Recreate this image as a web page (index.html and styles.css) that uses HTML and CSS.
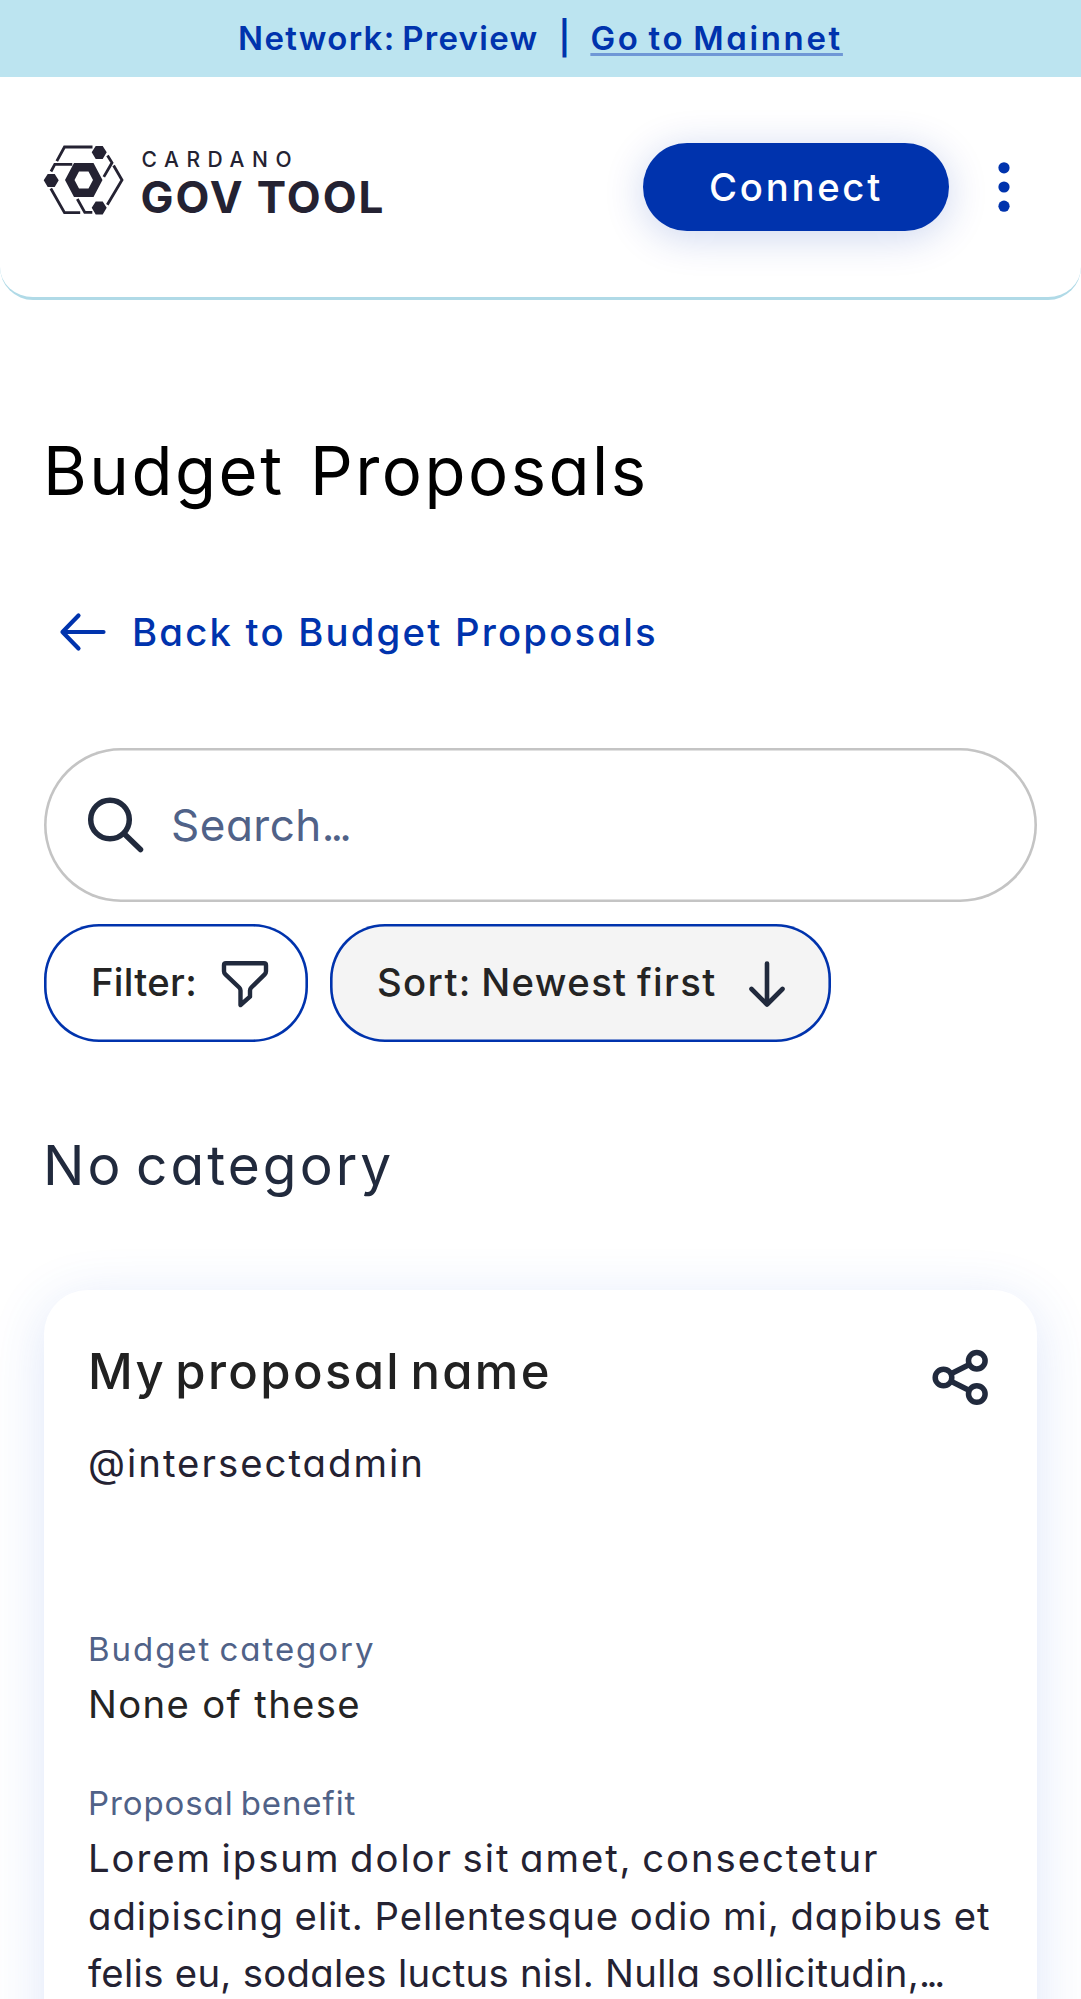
FILE: index.html
```html
<!DOCTYPE html>
<html lang="en">
<head>
<meta charset="utf-8">
<title>Budget Proposals</title>
<link rel="stylesheet" href="styles.css">
</head>
<body>
<div class="banner">
  <span class="network">Network: Preview</span>
  <span class="divider">|</span>
  <a class="mainnet">Go to Mainnet</a>
</div>
<header class="header">
  <svg class="logo" width="340" height="70" viewBox="0 0 340 70">
    <g fill="none" stroke="#242232" stroke-width="2.8">
      <path d="M12.8 16.2 20.5 2h28M7 26.500l3.800-7.200h17.500M6.800 43.500 20.500 67.600h15.700M63.500 10.500l4.500 7.200-8.200 14.200M69.600 20.500 78 35 63.300 59.800M33.300 54l7.500 13.400h7.500"/>
    </g>
    <g fill="#242232">
      <path d="M51.700 1h7l4 6.300-4 6.700h-7l-4-6.700zM3.700 29h7l4 6.300-4 6.700h-7l-4-6.700zM51.700 56.500h7l4 6.300-4 6.700h-7l-4-6.700z"/>
      <path fill-rule="evenodd" d="M30 18h19.500L58.500 35 49.500 52H30L21 35zM35 26.500 30.500 35l4.500 8.500h9.500L49 35l-4.500-8.500z"/>
    </g>
    <text class="logo-small" x="97.500" y="22" textLength="150">CARDANO</text>
    <text class="logo-big" x="96.500" y="68.300" textLength="243">GOV TOOL</text>
  </svg>
  <div class="actions">
    <button class="connect">Connect</button>
    <svg class="menu" width="12" height="50" viewBox="0 0 12 50" fill="#0033ad"><circle cx="6" cy="5.800" r="5.600"/><circle cx="6" cy="25" r="5.600"/><circle cx="6" cy="44.200" r="5.600"/></svg>
  </div>
</header>
<main class="main">
  <h1 class="title">Budget Proposals</h1>
  <a class="back">
    <svg width="48" height="40" viewBox="0 0 48 40" fill="none" stroke="#0033ad" stroke-width="4.200" stroke-linecap="round" stroke-linejoin="round"><path d="M44.500 20H3.500M19.500 3.500 3.500 20l16 16.500"/></svg>
    <span>Back to Budget Proposals</span>
  </a>
  <div class="search">
    <svg width="58" height="58" viewBox="0 0 58 58" fill="none" stroke="#212a3d" stroke-width="5.500" stroke-linecap="round"><circle cx="23" cy="23.500" r="19.300"/><path d="M38 38.500 53.500 53.500"/></svg>
    <p>Search<span class="dots">...</span></p>
  </div>
  <div class="chips">
    <button class="chip"><span>Filter:</span>
      <svg width="48" height="48" viewBox="0 0 48 48" fill="none" stroke="#212a3d" stroke-width="4.400" stroke-linejoin="round"><path d="M5 3.300h38q2 0 2 2v6q0 1.800-1.300 3.100L30.300 27.500q-1.300 1.300-1.300 3v6.200L19.500 45V30.500q0-1.700-1.300-3L4.400 14.400Q3 13.100 3 11.300v-6q0-2 2-2z"/></svg>
    </button>
    <button class="chip chip-active"><span>Sort: Newest first</span>
      <svg width="38" height="48" viewBox="0 0 38 48" fill="none" stroke="#212a3d" stroke-width="4.600" stroke-linecap="round" stroke-linejoin="round"><path d="M19 3.500v41M3.500 29 19 44.500 34.500 29"/></svg>
    </button>
  </div>
  <h2 class="category">No category</h2>
  <article class="card">
    <div class="card-head">
      <h3 class="card-title">My proposal name</h3>
      <svg class="share" width="57" height="57" viewBox="0 0 57 57" fill="none" stroke="#212a3d" stroke-width="5.500"><circle cx="11.500" cy="28.500" r="8.300"/><circle cx="44.800" cy="11.700" r="8.300"/><circle cx="44.800" cy="45" r="8.300"/><path d="m19 24.700 18.400-9.200M19 32.300l18.400 9.200"/></svg>
    </div>
    <p class="author">@intersectadmin</p>
    <p class="label label-category">Budget category</p>
    <p class="value value-category">None of these</p>
    <p class="label label-benefit">Proposal benefit</p>
    <p class="value"><span class="line-1">Lorem ipsum dolor sit amet, consectetur</span><br><span class="line-2">adipiscing elit. Pellentesque odio mi, dapibus et</span><br><span class="line-3">felis eu, sodales luctus nisl. Nulla sollicitudin,</span><span class="dots">...</span></p>
  </article>
</main>
</body>
</html>
```
FILE: styles.css
```css
* { box-sizing: border-box; margin: 0; padding: 0; }
body { width: 1081px; height: 1999px; overflow: hidden; background: #fff; color: #242232; font-family: Inter, sans-serif; font-size: 38.3px; font-feature-settings: "cv11", "calt" 0; white-space: nowrap; }
button { font: inherit; font-feature-settings: inherit; border: 0; background: none; }

.banner { display: flex; justify-content: center; align-items: center; height: 77px; padding-bottom: 2px; background: #bce4f0; color: #0033ad; font-size: 33px; font-weight: 600; line-height: 50px; }
.network { letter-spacing: 1.3px; word-spacing: -3px; }
.divider { margin: 0 20px; }
.mainnet { letter-spacing: 2.65px; word-spacing: -3px; text-decoration: underline; text-decoration-color: #6f97d6; text-decoration-thickness: 3px; text-underline-offset: 3px; }

.header { display: flex; justify-content: space-between; align-items: center; height: 223px; padding: 0 71px 0 44px; border-bottom: 3px solid #b0dae7; border-radius: 0 0 33px 33px; }
.logo { margin-bottom: 14px; overflow: visible; fill: #242232; }
.logo-small { font-size: 21px; font-weight: 500; }
.logo-big { font-size: 44px; font-weight: 700; }
.actions { display: flex; align-items: center; gap: 49px; }
.connect { width: 306px; height: 88px; border-radius: 44px; background: #0033ad; color: #fff; font-weight: 500; letter-spacing: 2.7px; box-shadow: 0 6px 40px rgba(0, 51, 173, .2); }

.dots { letter-spacing: -.09em; }
.main { padding: 121px 44px 0; }
.title { margin-left: -1px; color: #000; font-size: 67px; font-weight: 400; line-height: 100px; letter-spacing: 2.5px; word-spacing: 4px; }
.back { display: flex; align-items: center; gap: 25px; height: 66px; margin-top: 78px; padding-left: 15px; color: #0033ad; font-weight: 500; letter-spacing: 2.2px; }

.search { display: flex; align-items: center; gap: 26px; height: 154px; margin-top: 83px; padding-left: 43px; border-radius: 77px; box-shadow: inset 0 0 0 2.6px #c4c4c4; color: #506288; font-size: 44px; letter-spacing: .5px; }
.chips { display: flex; gap: 22px; margin-top: 22px; }
.chip { display: flex; align-items: center; justify-content: space-between; width: 264px; height: 118px; padding: 0 39px 2px 47px; border-radius: 55px; box-shadow: inset 0 0 0 2.6px #0033ad; color: #242424; font-weight: 500; letter-spacing: .3px; }
.chip-active { width: 501px; padding-right: 45px; background: #f4f4f4; letter-spacing: 1.35px; word-spacing: -2px; }
.chip svg { position: relative; top: 2px; }

.category { margin: 82px 0 0 -1px; color: #212a3d; font-size: 55px; font-weight: 400; line-height: 82px; letter-spacing: 3.05px; word-spacing: -6px; }
.card { height: 800px; margin-top: 84px; padding: 44px; border-radius: 44px; background: #fff; box-shadow: 0 11px 55px rgba(47, 98, 220, .16); }
.card-head { display: flex; justify-content: space-between; align-items: flex-start; height: 100px; }
.card-title { color: #212121; font-size: 49px; font-weight: 500; line-height: 75px; letter-spacing: 2.35px; word-spacing: -6px; }
.share { margin: 15px 4px 0 0; }
.author { line-height: 58px; margin-bottom: 132px; letter-spacing: 2.02px; }
.label { color: #506288; font-size: 33px; line-height: 50px; }
.label-category { letter-spacing: 1.95px; word-spacing: -3px; }
.label-benefit { letter-spacing: .9px; word-spacing: -3px; }
.value { margin: 2px 0 44px; line-height: 57.75px; }
.value-category { color: #242424; letter-spacing: 1.35px; }
.line-1 { letter-spacing: 1.93px; word-spacing: -3px; }
.line-2 { letter-spacing: .95px; word-spacing: -1px; }
.line-3 { letter-spacing: .31px; }
```
